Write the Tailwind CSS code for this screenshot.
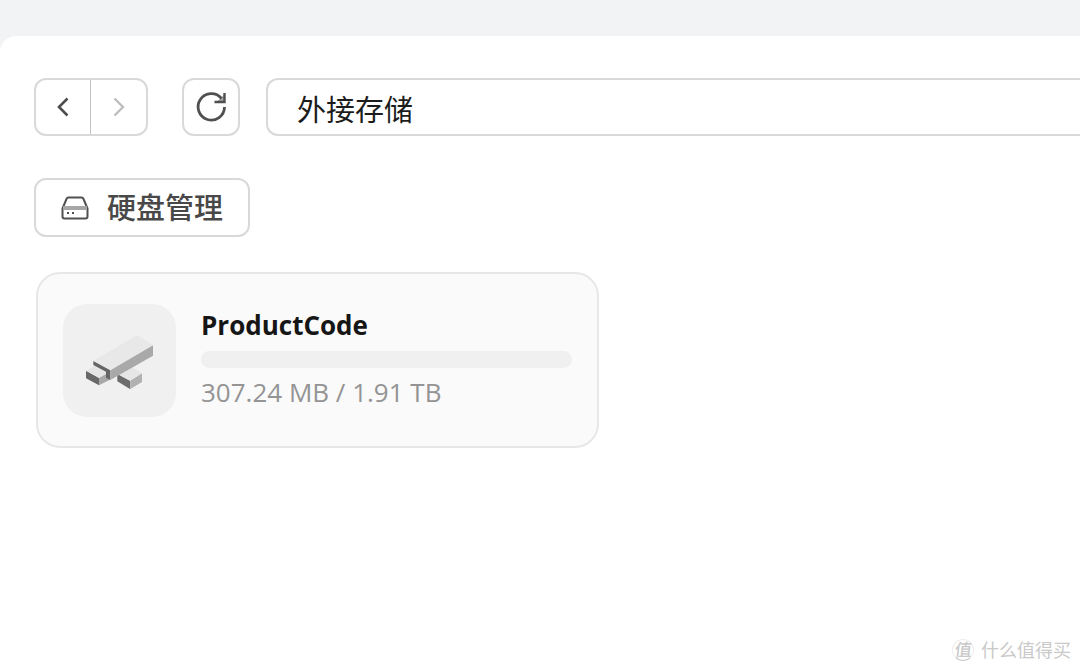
<!DOCTYPE html>
<html lang="zh-CN">
<head>
<meta charset="utf-8">
<meta name="viewport" content="width=device-width, initial-scale=1">
<title>外接存储</title>
<script src="https://cdn.jsdelivr.net/npm/@tailwindcss/browser@4"></script>
</head>
<body class="min-h-screen overflow-x-hidden bg-[#f1f3f5] pt-9 font-['Open_Sans','Noto_Sans_CJK_SC',sans-serif]">
<main class="relative flex min-h-[calc(100vh-36px)] flex-col items-start rounded-tl-2xl bg-white pt-[42px] pl-[34px]">
  <nav class="flex w-full items-center" aria-label="导航">
    <div class="flex h-[58px] rounded-xl border-2 border-[#d9d9d9]">
      <button type="button" aria-label="后退" class="flex w-[55px] items-center justify-center border-r border-[#c4c4c4]">
        <svg class="h-5 w-3" viewBox="0 0 12 20" fill="none" stroke="#4d4d4d" stroke-width="2.6"><path d="M10.500 1.500L2 10l8.500 8.500"/></svg>
      </button>
      <button type="button" aria-label="前进" disabled class="flex w-[55px] items-center justify-center">
        <svg class="h-5 w-3" viewBox="0 0 12 20" fill="none" stroke="#bdbdbd" stroke-width="2.300"><path d="M1.500 1.500L10 10l-8.500 8.500"/></svg>
      </button>
    </div>
    <button type="button" aria-label="刷新" class="ml-[34px] flex h-[58px] w-[58px] items-center justify-center rounded-xl border-2 border-[#d9d9d9]">
      <svg class="h-8 w-8" viewBox="0 0 32 32" fill="none" stroke="#505050" stroke-width="2.800"><path d="M29.500 16A13.200 13.200 0 1 1 26.500 7.500"/><path d="M29.500 2v9H19.500" stroke-width="2.400"/><path d="M29 4v6.500h-7z" fill="#505050" fill-opacity=".5" stroke="none"/></svg>
    </button>
    <input type="text" aria-label="路径" value="外接存储" class="ml-[26px] h-[58px] min-w-0 flex-1 rounded-l-xl border-2 border-r-0 border-[#d9d9d9] px-[29px] pt-0.5 text-[29px] text-[#1c1c1c] outline-none">
  </nav>

  <button type="button" class="mt-[42px] flex h-[59px] items-center gap-[18px] rounded-xl border-2 border-[#d9d9d9] px-[25px] text-[29px] font-medium text-[#484848]">
    <svg class="h-7 w-7" viewBox="0 0 28 28" fill="none" stroke="#505050" stroke-width="2" stroke-linejoin="round"><path d="M1.500 14.500L5.500 5q.5-1.500 2-1.500h13q1.500 0 2 1.500l4 9.500v8q0 2-2 2h-21q-2 0-2-2z"/><path d="M2 14h24" stroke="#a6a6a6" stroke-width="4"/><path d="M6 19h2M11 19h2"/></svg>
    硬盘管理
  </button>

  <article class="mt-[35px] ml-[2px] flex h-[176px] w-[563px] max-w-full items-center gap-[25px] rounded-3xl border-2 border-[#e7e7e7] bg-[#fafafa] px-[25px]">
    <div class="h-[113px] w-[113px] shrink-0 rounded-3xl bg-[#f0f0f0]">
      <svg class="h-[113px] w-[113px]" viewBox="39 39 339 339">
        <path d="M202 249L241 270v25L202 271z" fill="#6c6c6c"/>
        <path d="M241 268L276 247v26L241 294z" fill="#b1b1b1"/>
        <path d="M202 248L241 226 276 247 241 269z" fill="#e6e6e6"/>
        <path d="M108 239L147 260v23L108 262z" fill="#696969"/>
        <path d="M147 260L180 242v24L147 283z" fill="#a8a8a8"/>
        <path d="M108 239L141 220 180 241 147 261z" fill="#e5e5e5"/>
        <path d="M130 210L181 237v30L168 260V242L130 222z" fill="#656565"/>
        <path d="M181 237L309 163v31L181 267z" fill="#a9a9a9"/>
        <path d="M130 209L261 133 309 162 181 238z" fill="#e8e8e8"/>
      </svg>
    </div>
    <div class="min-w-0 flex-1 pb-[3px]">
      <h2 class="text-[26px] leading-8 font-bold text-[#161616]">ProductCode</h2>
      <div role="progressbar" aria-label="已用空间" aria-valuenow="0" aria-valuemin="0" aria-valuemax="100" class="mt-[10px] h-[17px] rounded-full bg-[#f0f0f0]"></div>
      <p class="mt-2 text-[26px] leading-8 text-[#949494]">307.24 MB / 1.91 TB</p>
    </div>
  </article>

  <div class="absolute right-[9px] bottom-2 flex items-center gap-[7px] text-[18px] leading-7 text-[#c9c9c9]">
    <span class="flex h-[22px] w-[22px] items-center justify-center rounded-full border border-[#eeeeee] border-b-[#cccccc] text-[17px]"><span class="-skew-x-6 font-medium">值</span></span>
    <span>什么值得买</span>
  </div>
</main>
</body>
</html>
